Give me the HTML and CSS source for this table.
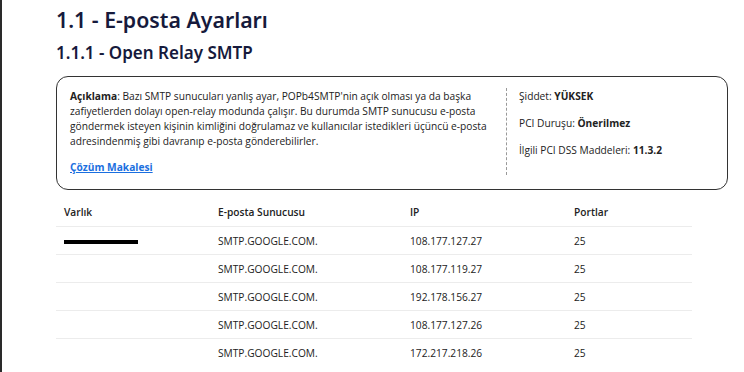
FILE: index.html
```html
<!DOCTYPE html>
<html lang="tr">
<head>
<meta charset="utf-8">
<link rel="stylesheet" href="styles.css">
</head>
<body>
<div class="page">
  <h2 class="h-section">1.1 - E-posta Ayarları</h2>
  <h3 class="h-sub">1.1.1 - Open Relay SMTP</h3>
  <div class="card">
    <div class="card-desc">
      <p class="desc"><b>Açıklama</b>: Bazı SMTP sunucuları yanlış ayar, POPb4SMTP'nin açık olması ya da başka zafiyetlerden dolayı open-relay modunda çalışır. Bu durumda SMTP sunucusu e-posta göndermek isteyen kişinin kimliğini doğrulamaz ve kullanıcılar istedikleri üçüncü e-posta adresindenmiş gibi davranıp e-posta gönderebilirler.</p>
      <a class="link" href="#">Çözüm Makalesi</a>
    </div>
    <div class="card-meta">
      <p>Şiddet: <b>YÜKSEK</b></p>
      <p>PCI Duruşu: <b>Önerilmez</b></p>
      <p>İlgili PCI DSS Maddeleri: <b>11.3.2</b></p>
    </div>
  </div>
  <table class="tbl">
    <thead>
      <tr><th class="c1">Varlık</th><th class="c2">E-posta Sunucusu</th><th class="c3">IP</th><th class="c4">Portlar</th></tr>
    </thead>
    <tbody>
      <tr><td><span class="redact"></span></td><td>SMTP.GOOGLE.COM.</td><td>108.177.127.27</td><td>25</td></tr>
      <tr><td></td><td>SMTP.GOOGLE.COM.</td><td>108.177.119.27</td><td>25</td></tr>
      <tr><td></td><td>SMTP.GOOGLE.COM.</td><td>192.178.156.27</td><td>25</td></tr>
      <tr><td></td><td>SMTP.GOOGLE.COM.</td><td>108.177.127.26</td><td>25</td></tr>
      <tr><td></td><td>SMTP.GOOGLE.COM.</td><td>172.217.218.26</td><td>25</td></tr>
    </tbody>
  </table>
</div>
</body>
</html>
```
FILE: styles.css
```css
html, body {
  margin: 0;
  padding: 0;
  background: #fff;
}
body {
  font-family: "Open Sans", "Noto Sans", sans-serif;
  color: #222;
  height: 372px;
  overflow: hidden;
}
.page {
  border-left: 2px solid #2a2a2a;
  min-height: 372px;
  padding: 6px 0 0 54px;
  box-sizing: border-box;
}
.h-section {
  font-family: "Noto Sans", "Open Sans", sans-serif;
  font-weight: 600;
  font-size: 21.3px;
  line-height: 28px;
  color: #161a3c;
  margin: 0;
}
.h-sub {
  font-family: "Noto Sans", "Open Sans", sans-serif;
  font-weight: 600;
  font-size: 17px;
  line-height: 22px;
  color: #161a3c;
  margin: 8px 0 0;
}
.card {
  display: flex;
  width: 672px;
  height: 114px;
  box-sizing: border-box;
  border: 1px solid #333;
  border-radius: 12px;
  margin-top: 12px;
}
.card-desc {
  width: 430px;
  padding: 12px 0 0 13px;
  font-size: 10.2px;
  line-height: 15px;
  color: #222;
}
.desc {
  margin: 0;
}
.desc b {
  font-weight: 700;
}
.link {
  display: inline-block;
  margin-top: 11px;
  color: #1a6fe0;
  font-weight: 700;
  text-decoration: underline;
}
.card-meta {
  margin: 11px 0 14px 6px;
  border-left: 1px dashed #999;
  padding: 1px 0 0 12px;
  font-size: 10.2px;
  line-height: 15px;
}
.card-meta p {
  margin: 0 0 12px;
}
.card-meta b {
  font-weight: 700;
}
.tbl {
  border-collapse: collapse;
  width: 636px;
  margin-top: 8px;
  font-size: 10.2px;
  color: #222;
}
.tbl th, .tbl td {
  text-align: left;
  padding: 0 0 0 8px;
  height: 27px;
  border-bottom: 1px solid #ececec;
}
.tbl th {
  font-weight: 600;
  height: 28px;
}
.tbl tbody tr:last-child td {
  border-bottom: none;
}
.c1 { width: 146px; }
.c2 { width: 184px; }
.c3 { width: 156px; }
.redact {
  display: inline-block;
  width: 74px;
  height: 4px;
  background: #000;
  vertical-align: middle;
}
```
